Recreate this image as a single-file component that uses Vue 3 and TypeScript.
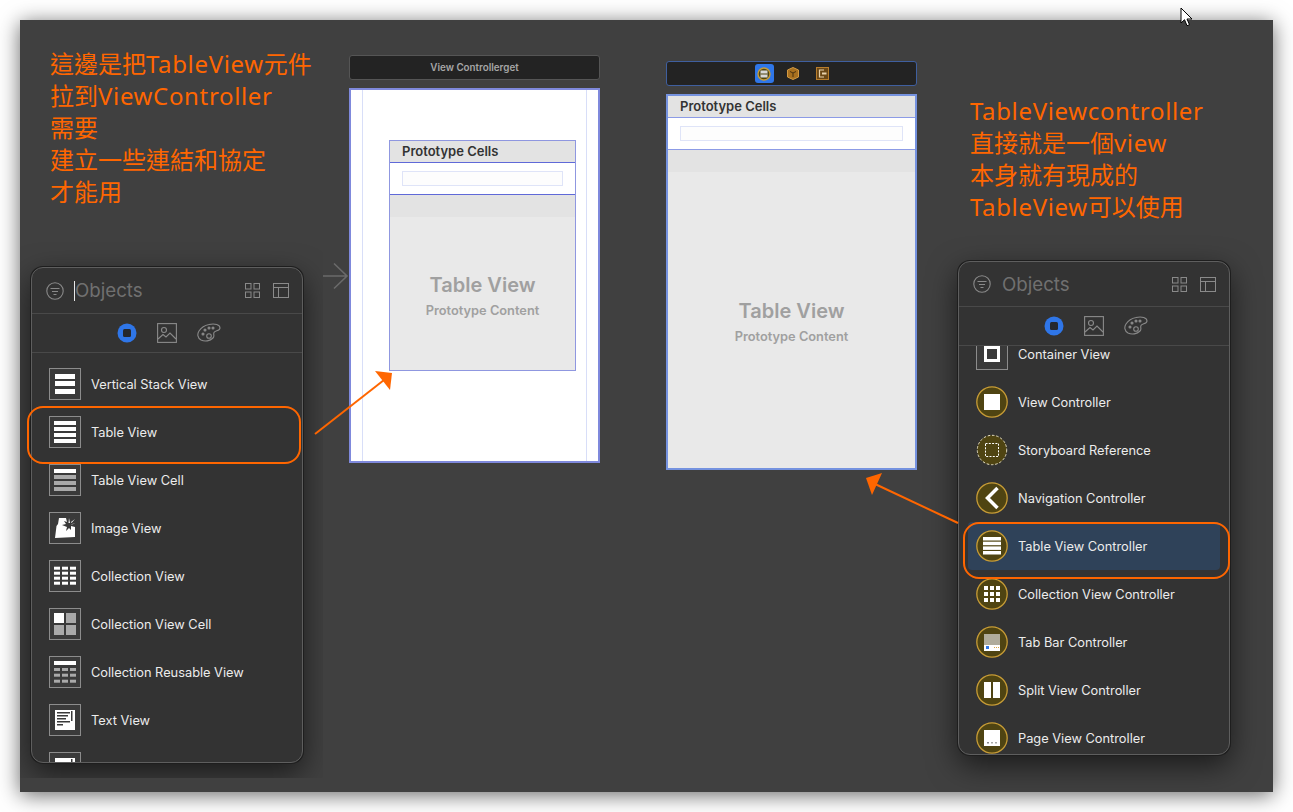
<template>
  <div class="shot">
    <div class="canvas">
      <!-- 左边说明 -->
      <div class="note note-left">
        <div v-for="line in leftNote" :key="line">
          <span v-for="(run, i) in splitRuns(line)" :key="i" :class="{ latin: isLatin(run) }">{{ run }}</span>
        </div>
      </div>
      <div class="note note-right">
        <div v-for="line in rightNote" :key="line">
          <span v-for="(run, i) in splitRuns(line)" :key="i" :class="{ latin: isLatin(run) }">{{ run }}</span>
        </div>
      </div>

      <!-- 左边 scene -->
      <div class="scene-bar bar-left">View Controllerget</div>
      <div class="scene scene-left">
        <div class="guides">
          <div class="table">
            <div class="table-head">Prototype Cells</div>
            <div class="table-cell"><div class="cell-input"></div></div>
            <div class="table-strip"></div>
            <div class="table-body">
              <div class="tv-title">Table View</div>
              <div class="tv-sub">Prototype Content</div>
            </div>
          </div>
        </div>
      </div>

      <!-- 右边 scene -->
      <div class="scene-bar bar-right">
        <span class="bar-btn">
          <svg width="14" height="14" viewBox="0 0 14 14">
            <circle cx="7" cy="7" r="6" fill="#4f4412" stroke="#c79c36" stroke-width="1.4" />
            <rect x="3.5" y="3.5" width="7" height="7" fill="#d8d8d8" />
            <rect x="3.5" y="6.5" width="7" height="1" fill="#4f4412" />
          </svg>
        </span>
        <svg width="12" height="13" viewBox="0 0 12 13">
          <path d="M6 .5 11.5 3v7L6 12.5.5 10V3z" fill="#a8701f" stroke="#d49a42" />
          <path d="M3 4.5 6 6l3-1.500M6 6v4" fill="none" stroke="#4a3210" />
        </svg>
        <svg class="bar-exit" width="13" height="13" viewBox="0 0 13 13">
          <rect x=".5" y=".5" width="12" height="12" fill="#6a4716" stroke="#b87d2c" />
          <path d="M8 3H3.500v7H8" fill="none" stroke="#e8d2ac" stroke-width="1.200" />
          <rect x="6" y="5.500" width="4.500" height="2" fill="#e8d2ac" />
        </svg>
      </div>
      <div class="scene scene-right">
        <div class="table">
          <div class="table-head">Prototype Cells</div>
          <div class="table-cell"><div class="cell-input"></div></div>
          <div class="table-strip"></div>
          <div class="table-body">
            <div class="tv-title">Table View</div>
            <div class="tv-sub">Prototype Content</div>
          </div>
        </div>
      </div>

      <!-- 起始箭头 -->
      <svg class="entry-arrow" width="26" height="28" viewBox="0 0 26 28">
        <path d="M0 14H24M11 1.500 24 14 11 26.500" fill="none" stroke="#6a6a6a" stroke-width="1.600" />
      </svg>

      <!-- Objects 面板 -->
      <div v-for="panel in panels" :key="panel.id" class="panel-clip" :class="'clip-' + panel.id">
        <div class="panel">
          <div class="panel-head">
            <svg width="18" height="18" viewBox="0 0 18 18" fill="none" stroke="#8a8a8a" stroke-width="1.100">
              <circle cx="9" cy="9" r="8.200" />
              <path d="M4.500 6.500h9M6 9.500h6M7.500 12.500h3" />
            </svg>
            <span v-if="panel.caret" class="caret"></span>
            <span class="search" :class="{ 'search-caret': panel.caret }">Objects</span>
            <svg class="head-grid" width="15" height="15" viewBox="0 0 15 15" fill="none" stroke="#8a8a8a">
              <rect x=".5" y=".5" width="5.500" height="5.500" />
              <rect x="9" y=".5" width="5.500" height="5.500" />
              <rect x=".5" y="9" width="5.500" height="5.500" />
              <rect x="9" y="9" width="5.500" height="5.500" />
            </svg>
            <svg width="16" height="15" viewBox="0 0 16 15" fill="none" stroke="#8a8a8a">
              <rect x=".5" y=".5" width="15" height="14" />
              <path d="M.5 4.500h15M5.500 4.500v10" />
            </svg>
          </div>
          <div class="panel-tabs">
            <svg width="20" height="20" viewBox="0 0 20 20">
              <circle cx="10" cy="10" r="9.500" fill="#2f76e8" />
              <rect x="6" y="6" width="8" height="8" rx="1.500" fill="#25282e" />
            </svg>
            <svg width="20" height="20" viewBox="0 0 20 20" fill="none" stroke="#8a8a8a" stroke-width="1.100">
              <rect x=".6" y=".6" width="18.800" height="18.800" />
              <circle cx="7" cy="7" r="2.500" />
              <path d="M1 16l5-4.500 3 2.500 4-4 6 6" />
            </svg>
            <svg width="24" height="20" viewBox="0 0 24 20" fill="none" stroke="#8a8a8a" stroke-width="1.100">
              <path d="M12 1.500c6-1.500 11 .5 11 3.500 0 3-5 2.500-6 4.500-1 2 1 3.500-1 5.500-3 3-8 4-12 2C.5 15 0 11 2 8c2-3 5-5.500 10-6.500z" />
              <circle cx="12" cy="13" r="2.300" />
              <circle cx="6" cy="11" r="1" fill="#8a8a8a" />
              <circle cx="8" cy="7" r="1" fill="#8a8a8a" />
              <circle cx="12" cy="5" r="1" fill="#8a8a8a" />
              <circle cx="16" cy="5" r="1" fill="#8a8a8a" />
            </svg>
          </div>
          <div class="panel-list">
            <div class="list-inner" :class="'inner-' + panel.id">
              <div v-for="(item, n) in panel.items" :key="n" class="row" :class="{ 'row-active': item.active }">
                <svg class="row-icon" width="32" height="32" viewBox="0 0 32 32">
                  <rect v-if="item.shape === 'box'" x=".5" y=".5" width="31" height="31" fill="#3a3a3a" stroke="#8c8c8c" />
                  <circle v-if="item.shape === 'circle'" cx="16" cy="16" r="15.200" fill="#4f4412" stroke="#c79c36" stroke-width="1.300" />
                  <circle v-if="item.shape === 'dashed'" cx="16" cy="16" r="14.700" fill="#4f4412" stroke="#e6dfc5" stroke-width="1" stroke-dasharray="2.500 1.800" />
                  <rect v-for="(r, i) in item.rects" :key="i" :x="r[0]" :y="r[1]" :width="r[2]" :height="r[3]" :fill="r[4] || '#fff'" />
                  <path v-if="item.path" :d="item.path" :fill="item.pathFill || 'none'" :stroke="item.pathStroke || 'none'" :stroke-width="item.pathWidth || 1" :stroke-dasharray="item.pathDash" />
                </svg>
                <span v-if="item.name" class="row-name">{{ item.name }}</span>
              </div>
            </div>
          </div>
        </div>
      </div>

      <!-- 橙色标注 -->
      <div class="mark mark-left"></div>
      <div class="mark mark-right"></div>
      <svg class="arrows" width="1253" height="772" viewBox="0 0 1253 772">
        <path d="M295 414 364 360" stroke="#ff6600" stroke-width="2" />
        <path d="M355 351 372 353 370 370z" fill="#ff6600" />
        <path d="M938 503 855 464" stroke="#ff6600" stroke-width="2" />
        <path d="M862 453 846 458 852 475z" fill="#ff6600" />
      </svg>
    </div>

    <!-- 鼠标指针 -->
    <svg class="pointer" width="14" height="20" viewBox="0 0 14 20">
      <path d="M1 1v15l3.500-3.300 2.500 6 2.500-1-2.500-5.700H12z" fill="#fff" stroke="#000" stroke-width="1" />
    </svg>
  </div>
</template>

<script setup lang="ts">
type Rect = [number, number, number, number, string?]

interface ObjectItem {
  name: string
  shape: 'box' | 'circle' | 'dashed'
  rects?: Rect[]
  path?: string
  pathFill?: string
  pathStroke?: string
  pathWidth?: number
  pathDash?: string
  active?: boolean
}

const GRAY = '#a9a9a9'
const DARK = '#3a3a3a'
const OLIVE = '#4f4412'

const leftNote = ['這邊是把TableView元件', '拉到ViewController', '需要', '建立一些連結和協定', '才能用']
const rightNote = ['TableViewcontroller', '直接就是一個view', '本身就有現成的', 'TableView可以使用']

// 英文部分字距要宽一点
const splitRuns = (line: string): string[] => line.match(/[A-Za-z]+|[^A-Za-z]+/g) ?? []
const isLatin = (run: string): boolean => /^[A-Za-z]/.test(run)

const tableBars = (fill2 = '#fff'): Rect[] => [
  [5, 5, 22, 4],
  [5, 11, 22, 4, fill2],
  [5, 17, 22, 4, fill2],
  [5, 23, 22, 4, fill2],
]

const grid = (rows: number[], h: number, fill = '#fff'): Rect[] =>
  rows.flatMap((y) => [5, 13, 21].map((x): Rect => [x, y, 6, h, fill]))

const textLines: Rect[] = [
  [8, 8, 13, 1.5, DARK],
  [8, 11, 11, 1.5, DARK],
  [8, 14, 9, 1.5, DARK],
  [8, 17, 13, 1.5, DARK],
  [8, 20, 6, 1.5, DARK],
  [22, 7, 1.5, 10, DARK],
]

const leftItems: ObjectItem[] = [
  { name: 'Vertical Stack View', shape: 'box', rects: [[6, 6, 20, 5], [6, 13, 20, 5], [6, 21, 20, 5]] },
  { name: 'Table View', shape: 'box', rects: tableBars() },
  { name: 'Table View Cell', shape: 'box', rects: tableBars(GRAY) },
  {
    name: 'Image View',
    shape: 'box',
    path: 'M10 6H17L18 10 15 9 17 12 13 13 18 15 17 19 20 16 22 18 22 14 26 15V25L6 26 7.500 14 9 12zM20 6 21 11 19.500 11zM26 7 22.500 11 22 10zM26.500 11.500 22.500 12.500 22.500 12z',
    pathFill: '#fff',
  },
  { name: 'Collection View', shape: 'box', rects: grid([6.700, 11.700, 16.700, 21.700], 3) },
  { name: 'Collection View Cell', shape: 'box', rects: [[5, 5, 10, 10], [17, 5, 10, 10, GRAY], [5, 17, 10, 10, GRAY], [17, 17, 10, 10, GRAY]] },
  { name: 'Collection Reusable View', shape: 'box', rects: [[5, 5, 22, 4], ...grid([12, 17.700, 23.700], 3, GRAY)] },
  { name: 'Text View', shape: 'box', rects: [[6, 6, 20, 20], ...textLines] },
  { name: '', shape: 'box', rects: [[6, 6, 20, 20], [22, 7, 1.5, 10, DARK]] },
]

const rightItems: ObjectItem[] = [
  { name: 'Container View', shape: 'box', path: 'M9.500 9.500h13v13h-13z', pathStroke: '#fff', pathWidth: 3 },
  { name: 'View Controller', shape: 'circle', rects: [[8, 8, 16, 16]] },
  { name: 'Storyboard Reference', shape: 'dashed', path: 'M9.500 9.500h13v13h-13z', pathStroke: '#fff', pathDash: '2 1.300' },
  { name: 'Navigation Controller', shape: 'circle', path: 'M21.500 6 11.500 16l10 10', pathStroke: '#fff', pathWidth: 3.500 },
  { name: 'Table View Controller', shape: 'circle', active: true, rects: [[7, 7, 18, 3.500], [7, 11.700, 18, 3.500], [7, 16.400, 18, 3.500], [7, 21, 18, 3.500]] },
  {
    name: 'Collection View Controller',
    shape: 'circle',
    rects: [8, 14, 20].flatMap((y) => [8, 14, 20].map((x): Rect => [x, y, 4, 4])),
  },
  {
    name: 'Tab Bar Controller',
    shape: 'circle',
    rects: [[8, 8, 16, 12, '#b0ac9c'], [8, 19, 16, 6], [10, 20, 3, 3, '#2f76e8'], [18, 21, 1, 1, '#d9a441'], [20, 21, 1, 1, '#d9a441'], [22, 21, 1, 1, '#d9a441']],
  },
  { name: 'Split View Controller', shape: 'circle', rects: [[8, 8, 16, 16], [15, 8, 2, 16, OLIVE]] },
  { name: 'Page View Controller', shape: 'circle', rects: [[8, 8, 16, 16], [11, 20, 2, 1.500, '#888'], [15, 20, 2, 1.500, GRAY], [19, 20, 2, 1.500, GRAY]] },
]

const panels = [
  { id: 'left', caret: true, items: leftItems },
  { id: 'right', caret: false, items: rightItems },
]
</script>

<style>
html,
body {
  margin: 0;
  background: #fff;
}
</style>

<style scoped>
.shot {
  position: relative;
  width: 1293px;
  height: 812px;
  overflow: hidden;
  padding: 20px;
  box-sizing: border-box;
  font-family: Inter, 'Noto Sans CJK TC', sans-serif;
}

.canvas {
  position: relative;
  width: 1253px;
  height: 772px;
  background: #404040;
  box-shadow: 0 3px 20px rgba(0, 0, 0, 0.6);
}

.note {
  position: absolute;
  color: #ff6600;
  font-family: 'Noto Sans', 'Noto Sans CJK TC', sans-serif;
  font-size: 24px;
  line-height: 32px;
  white-space: nowrap;
}

.latin {
  letter-spacing: 0.65px;
}

.note-left {
  left: 30px;
  top: 28px;
}

.note-right {
  left: 950px;
  top: 75px;
}

.scene-bar {
  position: absolute;
  box-sizing: border-box;
  width: 251px;
  height: 25px;
  border-radius: 3px;
  background: #232323;
  display: flex;
  align-items: center;
  justify-content: center;
}

.bar-left {
  left: 329px;
  top: 35px;
  border: 1px solid #555;
  color: #a6a6a6;
  font-size: 9.800px;
  font-weight: 600;
}

.bar-right {
  left: 646px;
  top: 41px;
  border: 1px solid #3f5f9f;
  gap: 13px;
}

.bar-btn {
  width: 19px;
  height: 19px;
  border-radius: 3px;
  background: #2f76e8;
  display: flex;
  align-items: center;
  justify-content: center;
}

.bar-exit {
  margin-left: 4px;
}

.scene {
  position: absolute;
  box-sizing: border-box;
  background: #fff;
  display: flex;
}

.scene-left {
  left: 329px;
  top: 68px;
  width: 251px;
  height: 375px;
  border: 2px solid #7f89dc;
}

.scene-right {
  left: 646px;
  top: 74px;
  width: 251px;
  height: 376px;
  border: 2px solid #7592df;
}

.guides {
  flex: 1;
  margin: 0 11px;
  padding: 50px 10px 90px 26px;
  border-left: 1px solid #d8def8;
  border-right: 1px solid #d8def8;
  display: flex;
}

.table {
  flex: 1;
  display: flex;
  flex-direction: column;
  background: #e9e9e9;
}

.scene-left .table {
  border: 1px solid #8f97e0;
  box-sizing: border-box;
}

.table-head {
  height: 21px;
  background: #e3e3e3;
  color: #333;
  font-size: 13px;
  font-weight: 600;
  line-height: 21px;
  padding-left: 12px;
}

.table-cell {
  height: 33px;
  box-sizing: border-box;
  background: #fff;
  border-top: 1px solid #5f69d8;
  border-bottom: 1px solid #5f69d8;
  padding: 8px 12px;
  display: flex;
}

.scene-right .table-cell {
  border-color: #8c9be6;
}

.cell-input {
  flex: 1;
  border: 1px solid #dfe4f8;
  background: #fdfdfd;
}

.table-strip {
  height: 22px;
  background: #e3e3e3;
}

.table-body {
  flex: 1;
  display: flex;
  flex-direction: column;
  align-items: center;
  justify-content: center;
  color: #a0a0a0;
  font-weight: 600;
}

.tv-title {
  margin-top: 3px;
  font-size: 20px;
  line-height: 26px;
}

.tv-sub {
  margin-top: 5px;
  font-size: 12.800px;
  line-height: 16px;
}

.entry-arrow {
  position: absolute;
  left: 303px;
  top: 242px;
  z-index: 2;
}

.panel-clip {
  position: absolute;
  overflow: hidden;
}

.clip-left {
  left: 0;
  top: 222px;
  width: 303px;
  height: 536px;
  padding: 25px 20px 0 11px;
  box-sizing: border-box;
}

.clip-right {
  left: 900px;
  top: 200px;
  width: 353px;
  height: 572px;
  padding: 41px 43px 0 38px;
  box-sizing: border-box;
}

.panel {
  width: 272px;
  box-sizing: border-box;
  background: #333;
  border: 1px solid #5e5e5e;
  border-radius: 12px;
  box-shadow: 0 0 0 1px #1e1e1e, 0 10px 30px rgba(0, 0, 0, 0.6);
  display: flex;
  flex-direction: column;
}

.clip-left .panel {
  height: 496px;
}

.clip-right .panel {
  height: 494px;
}

.panel-head {
  height: 45px;
  flex: none;
  box-sizing: border-box;
  padding: 0 13px 0 14px;
  border-bottom: 1px solid #494949;
  display: flex;
  align-items: center;
}

.clip-left .panel-head {
  height: 46px;
}

.search {
  margin-left: 11px;
  flex: 1;
  color: #707070;
  font-size: 18.700px;
}

.search-caret {
  margin-left: 0;
}

.caret {
  width: 1px;
  height: 20px;
  margin-left: 10px;
  background: #e8e8e8;
}

.head-grid {
  margin-right: 13px;
}

.panel-tabs {
  height: 39px;
  flex: none;
  box-sizing: border-box;
  border-bottom: 1px solid #494949;
  display: flex;
  align-items: center;
  justify-content: center;
  gap: 20px;
  padding-left: 3px;
}

.panel-list {
  flex: 1;
  min-height: 0;
  overflow: hidden;
  border-radius: 0 0 11px 11px;
}

.list-inner {
  padding: 0 9px;
}

.inner-left {
  padding-top: 7px;
}

.inner-right {
  margin-top: -16px;
}

.row {
  height: 48px;
  box-sizing: border-box;
  padding-left: 8px;
  border-radius: 4px;
  display: flex;
  align-items: center;
}

.row-active {
  background: #2f4259;
}

.row-icon {
  flex: none;
}

.row-name {
  margin-left: 10px;
  color: #ececec;
  font-size: 12.800px;
  white-space: nowrap;
}

.mark {
  position: absolute;
  box-sizing: border-box;
  border: 2px solid #ff6600;
  border-radius: 16px;
}

.mark-left {
  left: 7px;
  top: 386px;
  width: 274px;
  height: 58px;
}

.mark-right {
  left: 943px;
  top: 502px;
  width: 267px;
  height: 57px;
}

.arrows {
  position: absolute;
  left: 0;
  top: 0;
  pointer-events: none;
}

.pointer {
  position: absolute;
  left: 1180px;
  top: 7px;
}
</style>
